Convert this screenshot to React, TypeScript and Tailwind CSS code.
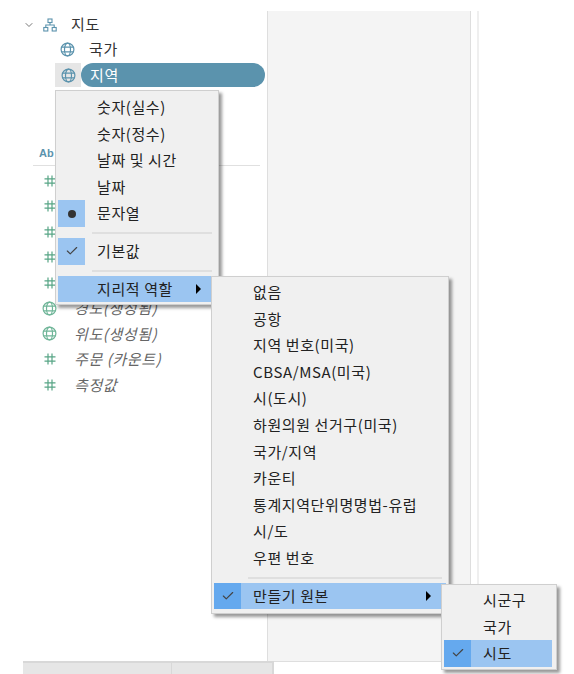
import { Check, ChevronDown } from "lucide-react";

const FONT = "font-['Noto_Sans_CJK_KR','Noto_Sans',sans-serif]";

function Globe({ color = "#5b93ad" }: { color?: string }) {
	return (
		<svg width="15" height="15" viewBox="0 0 15 15" fill="none" stroke={color} strokeWidth="1.2">
			<circle cx="7.5" cy="7.5" r="6.4" />
			<ellipse cx="7.5" cy="7.5" rx="3" ry="6.4" />
			<path d="M1.5 5.2h12M1.5 9.8h12" />
		</svg>
	);
}

function Hash() {
	return (
		<svg width="12" height="12" viewBox="0 0 12 12" fill="none" stroke="#57a585" strokeWidth="1.2">
			<path d="M4 0.5v11M8 0.5v11M0.5 3.8h11M0.5 8.2h11" />
		</svg>
	);
}

function Hierarchy() {
	return (
		<svg width="14" height="14" viewBox="0 0 14 14" fill="none" stroke="#5b93ad" strokeWidth="1.1">
			<rect x="5" y="1" width="4" height="3.5" />
			<rect x="0.8" y="9.5" width="4" height="3.5" />
			<rect x="9.2" y="9.5" width="4" height="3.5" />
			<path d="M7 4.5v2.5M2.8 9.5V7h8.4v2.5" />
		</svg>
	);
}

function MeasureRow({ label, globe, hidden }: { label: string; globe?: boolean; hidden?: boolean }) {
	return (
		<div className="h-[25.5px] flex items-center">
			<div className="w-[42px] pl-[1px] flex justify-center shrink-0">{globe ? <Globe color="#6fb598" /> : <Hash />}</div>
			{!hidden && <span className="ml-[4px] text-[15px] italic text-[#666] tracking-[0.6px]">{label}</span>}
		</div>
	);
}

function MenuItem({ label, active, mark, arrow, marked }: { label: string; active?: boolean; mark?: "check" | "dot"; arrow?: boolean; marked?: boolean }) {
	return (
		<div className={`h-[26.6px] flex items-center ${active ? "bg-[#9bc5f1]" : ""}`}>
			<div className={`w-[27px] h-full shrink-0 flex items-center justify-center ${marked ? (active ? "bg-[#65a9ee]" : "bg-[#9bc5f1]") : ""}`}>
				{mark === "check" && <Check size={14} strokeWidth={2} className="text-[#444]" />}
				{mark === "dot" && <span className="w-[8px] h-[8px] rounded-full bg-[#333]" />}
			</div>
			<span className="ml-[12px] text-[15px] text-[#222] tracking-[0.6px] whitespace-nowrap flex-1">{label}</span>
			{arrow && <span className="mr-[15px] w-0 h-0 border-y-[5px] border-y-transparent border-l-[5px] border-l-black" />}
		</div>
	);
}

function Separator() {
	return <div className="h-[2px] bg-[#dfdfdf] ml-[34px] mt-[5px] mb-[4px] mr-[4px]" />;
}

const Menu = ({ className, children }: { className: string; children: React.ReactNode }) => (
	<div className={`absolute z-10 bg-[#f0f0f0] border border-[#cfcfcf] p-[2px] shadow-[3px_3px_3px_rgba(0,0,0,0.4)] ${className}`}>{children}</div>
);

export default function App() {
	return (
		<div className={`relative w-[574px] h-[674px] overflow-hidden bg-white ${FONT}`}>
			<div className="h-[11px]" />
			<div className="flex h-[650px]">
				{/* data pane */}
				<div className="w-[267px] shrink-0 pt-[1px] text-[#333]">
					<div className="h-[25px] flex items-center pl-[23px]">
						<ChevronDown size={12} strokeWidth={2} className="text-[#777]" />
						<span className="ml-[8px] flex"><Hierarchy /></span>
						<span className="ml-[14px] text-[15px] tracking-[0.6px]">지도</span>
					</div>
					<div className="h-[25px] flex items-center pl-[60px]">
						<Globe />
						<span className="ml-[14px] text-[15px] tracking-[0.6px]">국가</span>
					</div>
					<div className="h-[24px] mt-[1px] flex items-center pl-[55px] pr-[2px]">
						<div className="w-[26px] h-full bg-[#e6e6e6] flex items-center justify-center"><Globe /></div>
						<div className="flex-1 h-full rounded-full bg-[#5b93ad] text-white text-[15px] tracking-[0.6px] pl-[9px] flex items-center">지역</div>
					</div>
					<div className="h-[54px]" />
					<div className="pl-[39px] h-[24px] flex items-center text-[11px] font-bold text-[#5b93ad] font-['Liberation_Sans',sans-serif]">Ab</div>
					<div className="ml-[33px] mr-[7px] h-[1px] bg-[#e0e0e0]" />
					<div className="pt-[2px] pl-[28px]">
						<MeasureRow label="" hidden />
						<MeasureRow label="" hidden />
						<MeasureRow label="" hidden />
						<MeasureRow label="" hidden />
						<MeasureRow label="" hidden />
						<MeasureRow label="경도(생성됨)" globe />
						<MeasureRow label="위도(생성됨)" globe />
						<MeasureRow label="주문 (카운트)" />
						<MeasureRow label="측정값" />
					</div>
				</div>
				{/* shelf column */}
				<div className="w-[204px] shrink-0 bg-[#f4f4f4] border-x border-[#dedede]" />
				<div className="w-[6px] shrink-0" />
				<div className="flex-1 border-l-2 border-[#efefef]" />
			</div>
			<div className="flex h-[13px] pl-[23px]">
				<div className="w-[149px] bg-[#e6e6e6] border-t-2 border-r border-[#d8d8d8]" />
				<div className="w-[102px] bg-[#e6e6e6] border-t-2 border-r-2 border-[#d8d8d8]" />
				<div className="w-[176px] border-t border-[#dedede]" />
			</div>

			<Menu className="left-[55px] top-[90px] w-[164px] h-[215px]">
				<div className="h-[1px]" />
				<MenuItem label="숫자(실수)" />
				<MenuItem label="숫자(정수)" />
				<MenuItem label="날짜 및 시간" />
				<MenuItem label="날짜" />
				<MenuItem label="문자열" mark="dot" marked />
				<Separator />
				<MenuItem label="기본값" mark="check" marked />
				<Separator />
				<MenuItem label="지리적 역할" active arrow />
			</Menu>

			<Menu className="left-[211px] top-[276px] w-[238px] h-[338px]">
				<MenuItem label="없음" />
				<MenuItem label="공항" />
				<MenuItem label="지역 번호(미국)" />
				<MenuItem label="CBSA/MSA(미국)" />
				<MenuItem label="시(도시)" />
				<MenuItem label="하원의원 선거구(미국)" />
				<MenuItem label="국가/지역" />
				<MenuItem label="카운티" />
				<MenuItem label="통계지역단위명명법-유럽" />
				<MenuItem label="시/도" />
				<MenuItem label="우편 번호" />
				<Separator />
				<MenuItem label="만들기 원본" active arrow mark="check" marked />
			</Menu>

			<Menu className="left-[441px] top-[584px] w-[116px] h-[86px] pr-[4px]">
				<MenuItem label="시군구" />
				<MenuItem label="국가" />
				<MenuItem label="시도" active mark="check" marked />
			</Menu>
		</div>
	);
}
